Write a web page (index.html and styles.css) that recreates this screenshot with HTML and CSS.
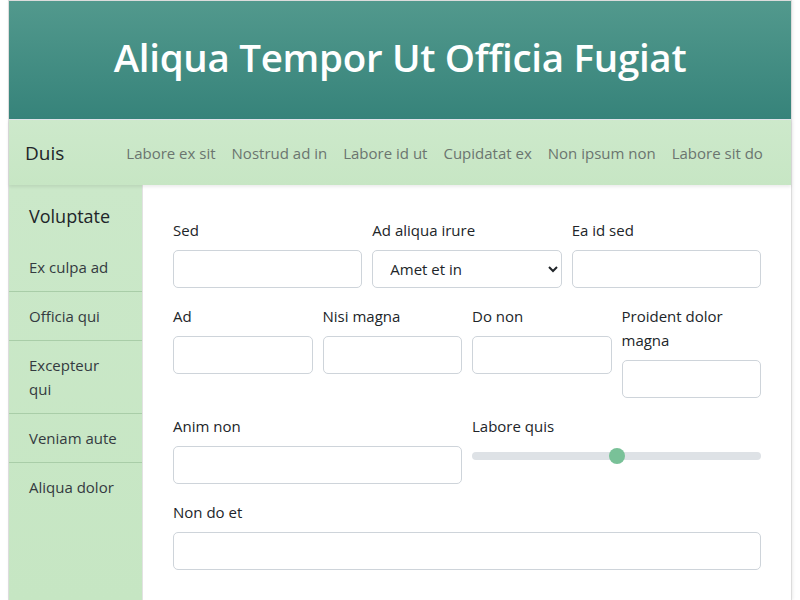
FILE: index.html
```html
<!DOCTYPE html>
<html lang="la">
<head>
<meta charset="utf-8">
<title>Aliqua Tempor Ut Officia Fugiat</title>
<link rel="stylesheet" href="styles.css">
</head>
<body>
<div class="page">
  <header class="hero">
    <h1>Aliqua Tempor Ut Officia Fugiat</h1>
  </header>
  <nav class="topnav">
    <span class="brand">Duis</span>
    <a href="#">Labore ex sit</a>
    <a href="#">Nostrud ad in</a>
    <a href="#">Labore id ut</a>
    <a href="#">Cupidatat ex</a>
    <a href="#">Non ipsum non</a>
    <a href="#">Labore sit do</a>
  </nav>
  <div class="layout">
    <aside class="sidebar">
      <div class="side-title">Voluptate</div>
      <a class="side-item" href="#">Ex culpa ad</a>
      <a class="side-item" href="#">Officia qui</a>
      <a class="side-item" href="#">Excepteur qui</a>
      <a class="side-item" href="#">Veniam aute</a>
      <a class="side-item last" href="#">Aliqua dolor</a>
    </aside>
    <main class="content">
      <div class="row cols-3">
        <div class="field"><label>Sed</label><input type="text"></div>
        <div class="field"><label>Ad aliqua irure</label><select><option>Amet et in</option></select></div>
        <div class="field"><label>Ea id sed</label><input type="text"></div>
      </div>
      <div class="row cols-4">
        <div class="field"><label>Ad</label><input type="text"></div>
        <div class="field"><label>Nisi magna</label><input type="text"></div>
        <div class="field"><label>Do non</label><input type="text"></div>
        <div class="field"><label>Proident dolor magna</label><input type="text"></div>
      </div>
      <div class="row cols-2">
        <div class="field"><label>Anim non</label><input type="text"></div>
        <div class="field"><label>Labore quis</label>
          <div class="range"><div class="track"></div><div class="thumb"></div></div>
        </div>
      </div>
      <div class="row cols-1">
        <div class="field"><label>Non do et</label><input type="text"></div>
      </div>
    </main>
  </div>
</div>
</body>
</html>
```
FILE: styles.css
```css
* { box-sizing: border-box; }
html, body { margin: 0; padding: 0; background: #fff; }
body {
  font-family: "Open Sans", "Noto Sans", sans-serif;
  color: #212529;
  font-size: 15px;
  line-height: 24px;
  padding: 0 8px;
  height: 600px;
  overflow: hidden;
}
.page {
  border: 1px solid #dcdcdc;
  border-bottom: none;
  height: 600px;
  display: flex;
  flex-direction: column;
  box-shadow: 1px 0 3px rgba(0,0,0,0.08);
}
.hero {
  height: 118px;
  padding-bottom: 6px;
  background: linear-gradient(#52998d, #36837a);
  display: flex;
  align-items: center;
  justify-content: center;
}
.hero h1 {
  margin: 0;
  color: #fff;
  font-size: 38.5px;
  font-weight: 600;
  letter-spacing: -0.3px;
}
.topnav {
  height: 66px;
  border-top: 1px solid #dde3e8;
  background: linear-gradient(#cde9cb, #c7e6c4);
  display: flex;
  align-items: center;
  padding: 0 0 0 16px;
  box-shadow: 0 2px 3px rgba(0,0,0,0.08);
  position: relative;
  z-index: 1;
}
.brand {
  font-size: 19px;
  margin-right: 54px;
  color: #212529;
}
.topnav a {
  color: #6b756f;
  text-decoration: none;
  font-size: 15px;
  padding: 0 8px;
}
.layout {
  flex: 1;
  display: flex;
}
.sidebar {
  width: 134px;
  background: linear-gradient(#cbe8c9, #c6e6c3);
  border-right: 1px solid #e2e2e2;
  display: flex;
  flex-direction: column;
}
.side-title {
  font-size: 18px;
  line-height: 27px;
  padding: 18px 20px 13px;
}
.side-item {
  padding: 12px 20px;
  color: #343a40;
  text-decoration: none;
  border-bottom: 1px solid #a9cda8;
  font-size: 15px;
}
.side-item.last { border-bottom: none; }
.content {
  flex: 1;
  padding: 33px 30px 0 30px;
  display: flex;
  flex-direction: column;
  gap: 16px;
}
.row {
  display: grid;
  gap: 10px;
}
.cols-3 { grid-template-columns: repeat(3, 1fr); }
.cols-4 { grid-template-columns: repeat(4, 1fr); }
.cols-2 { grid-template-columns: repeat(2, 1fr); }
.cols-1 { grid-template-columns: 1fr; }
.field {
  display: flex;
  flex-direction: column;
}
.field label {
  margin-bottom: 8px;
  font-size: 15px;
}
.field input, .field select {
  height: 38px;
  border: 1px solid #ced4da;
  border-radius: 5px;
  background: #fff;
  font-family: inherit;
  font-size: 15px;
  color: #212529;
  width: 100%;
}
.field select {
  padding: 0 10px 0 13px;
}
.range {
  position: relative;
  height: 38px;
}
.track {
  margin-top: 6px;
  height: 8px;
  border-radius: 4px;
  background: #dee2e6;
}
.thumb {
  position: absolute;
  left: 137px;
  top: 2px;
  width: 16px;
  height: 16px;
  border-radius: 50%;
  background: #79c198;
}
```
